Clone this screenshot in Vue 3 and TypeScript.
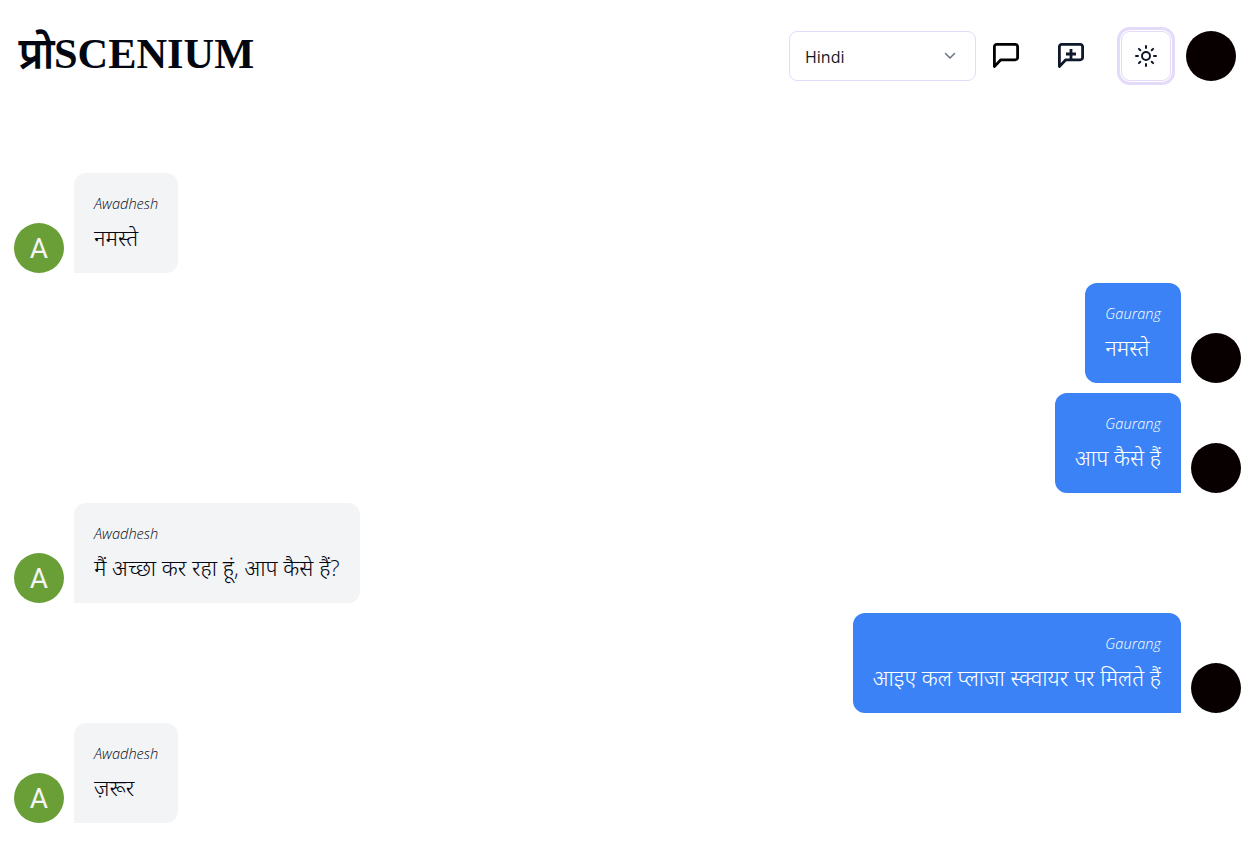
<template>
  <div class="page">
    <header class="top-bar">
      <div class="logo">प्रोSCENIUM</div>
      <div class="actions">
        <div class="lang-select">
          <span>Hindi</span>
          <svg class="chevron" width="20" height="20" viewBox="0 0 20 20" fill="none">
            <path d="M5.500 7.500 10 12l4.500-4.500" stroke="#6b7280" stroke-width="1.500" stroke-linecap="round" stroke-linejoin="round" />
          </svg>
        </div>
        <button class="icon-btn chat-btn" type="button" aria-label="chats">
          <svg width="28" height="28" viewBox="0 0 28 28" fill="none">
            <path d="M2.400 24.600V4.800a2.400 2.400 0 0 1 2.400-2.400h18.400a2.400 2.400 0 0 1 2.400 2.400v10.600a2.400 2.400 0 0 1-2.400 2.400H8.800Z" stroke="#000" stroke-width="2.800" stroke-linejoin="round" />
          </svg>
        </button>
        <button class="icon-btn new-btn" type="button" aria-label="new chat">
          <svg width="28" height="28" viewBox="0 0 28 28" fill="none">
            <path d="M2.400 24.600V4.800a2.400 2.400 0 0 1 2.400-2.400h18.400a2.400 2.400 0 0 1 2.400 2.400v10.600a2.400 2.400 0 0 1-2.400 2.400H8.800Z" stroke="#0f172a" stroke-width="2.800" stroke-linejoin="round" />
            <path d="M14 7v10M9 12h10" stroke="#0f172a" stroke-width="2.800" />
          </svg>
        </button>
        <button class="theme-btn" type="button" aria-label="theme">
          <svg width="24" height="24" viewBox="0 0 24 24" fill="none" stroke="#0f172a" stroke-width="2" stroke-linecap="round">
            <circle cx="12" cy="12" r="4" />
            <path d="M12 2v2M12 20v2M2 12h2M20 12h2M4.900 4.900l1.400 1.400M17.700 17.700l1.400 1.400M4.900 19.100l1.400-1.400M17.700 6.300l1.400-1.400" />
          </svg>
        </button>
        <div class="avatar dark"></div>
      </div>
    </header>

    <main class="messages">
      <div v-for="(m, i) in messages" :key="i" class="row" :class="m.mine ? 'mine' : 'theirs'">
        <div v-if="!m.mine" class="avatar green">A</div>
        <div class="bubble">
          <div class="name">{{ m.name }}</div>
          <div class="text">{{ m.text }}</div>
        </div>
        <div v-if="m.mine" class="avatar dark"></div>
      </div>
    </main>
  </div>
</template>

<script setup lang="ts">
interface Message {
  name: string
  text: string
  mine: boolean
}

const messages: Message[] = [
  { name: 'Awadhesh', text: 'नमस्ते', mine: false },
  { name: 'Gaurang', text: 'नमस्ते', mine: true },
  { name: 'Gaurang', text: 'आप कैसे हैं', mine: true },
  { name: 'Awadhesh', text: 'मैं अच्छा कर रहा हूं, आप कैसे हैं?', mine: false },
  { name: 'Gaurang', text: 'आइए कल प्लाजा स्क्वायर पर मिलते हैं', mine: true },
  { name: 'Awadhesh', text: 'ज़रूर', mine: false }
]
</script>

<style>
body {
  background: #fff;
  overflow: hidden;
}
</style>

<style scoped>
.page {
  width: 1256px;
  height: 849px;
  font-family: "Open Sans", "Noto Sans", "Liberation Sans", sans-serif;
  color: #030712;
}
.top-bar {
  display: flex;
  justify-content: space-between;
  padding: 31px 20px 0 19px;
  height: 173px;
  box-sizing: border-box;
}
.logo {
  font-family: "Liberation Serif", "Noto Serif", serif;
  font-weight: 700;
  font-size: 42.400px;
  line-height: 46px;
  color: #030712;
}
.actions {
  display: flex;
  align-items: flex-start;
}
.lang-select {
  width: 187px;
  height: 50px;
  box-sizing: border-box;
  display: flex;
  align-items: center;
  justify-content: space-between;
  padding: 1px 15px 0;
  border: 1px solid #e4daf9;
  border-radius: 8px;
  font-size: 16px;
  color: #111827;
}
.chevron { margin-top: -2px; }
.icon-btn {
  width: 28px;
  height: 28px;
  margin-top: 11px;
  padding: 0;
  border: 0;
  background: none;
}
.chat-btn { margin-left: 16px; }
.new-btn { margin-left: 37px; }
.theme-btn {
  width: 50px;
  height: 50px;
  margin-left: 36px;
  padding: 0;
  display: flex;
  align-items: center;
  justify-content: center;
  background: #fff;
  border: 1px solid #e4daf9;
  border-radius: 9px;
  box-shadow: 0 0 0 1px #fff, 0 0 0 4px #e4daf9;
}
.avatar {
  flex: none;
  width: 50px;
  height: 50px;
  border-radius: 50%;
}
.actions .avatar { margin-left: 15px; }
.avatar.dark { background: #080000; }
.avatar.green {
  display: flex;
  align-items: center;
  justify-content: center;
  background: #6a9f37;
  color: #f3f4f6;
  font-family: Roboto, "Liberation Sans", sans-serif;
  font-size: 28px;
}
.messages {
  display: flex;
  flex-direction: column;
  gap: 10px;
  padding: 0 15px 0 14px;
}
.row {
  display: flex;
  align-items: flex-end;
  gap: 10px;
}
.row.mine { justify-content: flex-end; }
.bubble {
  box-sizing: border-box;
  height: 100px;
  padding: 20px;
  border-radius: 12px;
}
.theirs .bubble {
  background: #f3f4f6;
  border-bottom-left-radius: 0;
}
.mine .bubble {
  background: #3b82f6;
  color: #fff;
  border-bottom-right-radius: 0;
}
.mine .name { text-align: right; }
.name {
  font-size: 14.600px;
  font-style: italic;
  font-weight: 300;
  line-height: 20px;
}
.text {
  margin-top: 9px;
  font-size: 22px;
  font-weight: 350;
  line-height: 30px;
}
</style>
